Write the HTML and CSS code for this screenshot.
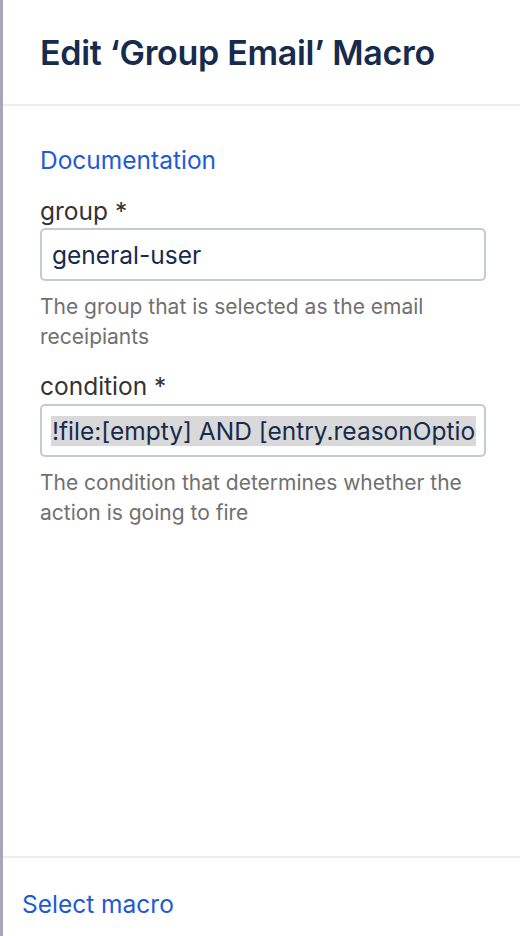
FILE: index.html
```html
<!DOCTYPE html>
<html>
<head>
<meta charset="utf-8">
<link rel="stylesheet" href="styles.css">
</head>
<body>
<div class="edge"></div>
<div class="panel">
  <header class="head">
    <h1 class="title">Edit ‘Group Email’ Macro</h1>
  </header>
  <main class="content">
    <a class="link doc">Documentation</a>
    <div class="field">
      <label class="label">group *</label>
      <div class="input"><div class="clip"><span class="value">general-user</span></div></div>
      <p class="help">The group that is selected as the email receipiants</p>
    </div>
    <div class="field">
      <label class="label">condition *</label>
      <div class="input tall"><div class="clip"><span class="value selected">!file:[empty] AND [entry.reasonOption] = Other</span></div></div>
      <p class="help">The condition that determines whether the action is going to fire</p>
    </div>
  </main>
  <footer class="foot">
    <a class="link">Select macro</a>
  </footer>
</div>
</body>
</html>
```
FILE: styles.css
```css
* { box-sizing: border-box; }
html, body { margin: 0; padding: 0; height: 100%; }
body {
  display: flex;
  width: 520px;
  height: 936px;
  font-family: Inter, "Noto Sans", sans-serif;
  background: #fff;
  overflow: hidden;
}
.edge {
  width: 3px;
  flex: none;
  background: #a3a9bb;
}
.panel {
  flex: 1;
  display: flex;
  flex-direction: column;
  min-width: 0;
}
.head {
  height: 106px;
  border-bottom: 2px solid #ebecf0;
  padding: 0 0 0 37px;
  display: flex;
  align-items: center;
}
.title {
  margin: 0;
  font-size: 34px;
  font-weight: 600;
  color: #172b4d;
  letter-spacing: -0.3px;
}
.content {
  flex: 1;
  padding: 39px 34px 0 37px;
  display: flex;
  flex-direction: column;
}
.link {
  color: #1d5bd6;
  font-size: 24.5px;
  text-decoration: none;
}
.doc { line-height: 30px; }
.field {
  display: flex;
  flex-direction: column;
  margin-top: 21px;
}
.field + .field { margin-top: 19px; }
.label {
  font-size: 24.5px;
  color: #333;
  line-height: 30px;
}
.input {
  margin-top: 2px;
  height: 53px;
  border: 2px solid #c6cad4;
  border-radius: 5px;
  padding: 0 8px 0 9px;
  display: flex;
  align-items: center;
}
.input.tall { margin-top: 3px; }
.clip {
  flex: 1;
  min-width: 0;
  overflow: hidden;
  white-space: nowrap;
  display: flex;
}
.value {
  font-size: 24.5px;
  color: #172b4d;
  line-height: 30px;
  padding: 0 1px;
}
.selected {
  background: #d9d9d9;
}
.help {
  margin: 11px 0 0;
  font-size: 21px;
  line-height: 30px;
  color: #707070;
}
.foot {
  height: 80px;
  border-top: 2px solid #ebecf0;
  padding: 14px 0 0 19px;
  display: flex;
  align-items: center;
}
```
